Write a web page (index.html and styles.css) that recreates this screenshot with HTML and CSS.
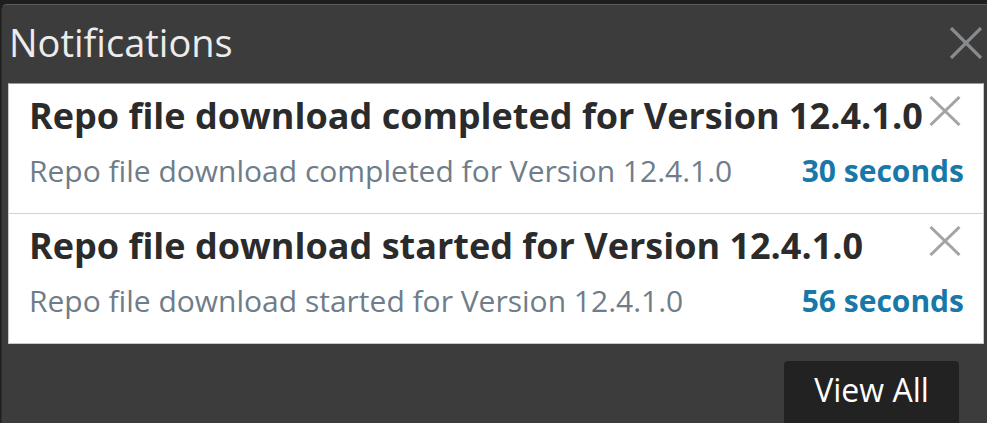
FILE: index.html
```html
<!DOCTYPE html>
<html lang="en">
<head>
<meta charset="utf-8">
<title>Notifications</title>
<link rel="stylesheet" href="styles.css">
</head>
<body>
<div class="panel">
  <div class="panel-header">
    <h1 class="panel-title">Notifications</h1>
    <button class="close close-header" aria-label="Close">
      <svg width="34" height="32" viewBox="0 0 34 32"><path d="M2 1 L32 31 M32 1 L2 31" stroke="currentColor" stroke-width="3.2" fill="none"/></svg>
    </button>
  </div>
  <ul class="list">
    <li class="item">
      <div class="item-top">
        <span class="item-title">Repo file download completed for Version 12.4.1.0</span>
        <button class="close close-item" aria-label="Dismiss">
          <svg width="32" height="30" viewBox="0 0 32 30"><path d="M1.5 1 L30.5 29 M30.5 1 L1.5 29" stroke="currentColor" stroke-width="3" fill="none"/></svg>
        </button>
      </div>
      <div class="item-bottom">
        <span class="item-desc">Repo file download completed for Version 12.4.1.0</span>
        <span class="item-time">30 seconds</span>
      </div>
    </li>
    <li class="item">
      <div class="item-top">
        <span class="item-title">Repo file download started for Version 12.4.1.0</span>
        <button class="close close-item" aria-label="Dismiss">
          <svg width="32" height="30" viewBox="0 0 32 30"><path d="M1.5 1 L30.5 29 M30.5 1 L1.5 29" stroke="currentColor" stroke-width="3" fill="none"/></svg>
        </button>
      </div>
      <div class="item-bottom">
        <span class="item-desc">Repo file download started for Version 12.4.1.0</span>
        <span class="item-time">56 seconds</span>
      </div>
    </li>
  </ul>
  <div class="panel-footer">
    <button class="view-all">View All</button>
  </div>
</div>
</body>
</html>
```
FILE: styles.css
```css
html, body {
  margin: 0;
  padding: 0;
  height: 100%;
  overflow: hidden;
  background: #1e1e1e;
  font-family: "Open Sans", "Noto Sans", sans-serif;
}

.panel {
  margin: 4px 0 0 1px;
  width: 990px;
  height: 430px;
  background: #3c3c3c;
  border-top: 1px solid #5c5c5c;
  border-left: 1px solid #2e2e2e;
  border-radius: 6px 0 0 0;
  box-sizing: border-box;
}

.panel-header {
  display: flex;
  align-items: flex-start;
  justify-content: space-between;
  padding: 15px 0 0 7px;
  height: 78px;
  box-sizing: border-box;
}

.panel-title {
  margin: 0;
  font-size: 38px;
  line-height: 44px;
  font-weight: 400;
  color: #ececec;
}

.close {
  background: none;
  border: 0;
  padding: 0;
  margin: 0;
  cursor: pointer;
  display: block;
}

.close svg {
  display: block;
}

.close-header {
  color: #888b8e;
  margin: 7px 8px 0 0;
}

.list {
  list-style: none;
  margin: 0 7px 0 6px;
  padding: 0;
  background: #ffffff;
  border: 1px solid #c8c8c8;
  border-top-color: #9a9a9a;
}

.item {
  padding: 12px 19px 0 20px;
  height: 129px;
  box-sizing: border-box;
}

.item + .item {
  border-top: 1px solid #d2d2d2;
  height: 130px;
}

.item-top {
  display: flex;
  align-items: flex-start;
  justify-content: space-between;
}

.item-title {
  font-size: 36px;
  line-height: 40px;
  font-weight: 700;
  color: #2b2b2b;
  white-space: nowrap;
}

.close-item {
  color: #a2a5a8;
  margin: 0 3px 0 0;
}

.item-bottom {
  display: flex;
  justify-content: space-between;
  align-items: baseline;
  margin-top: 17px;
}

.item-desc {
  font-size: 30px;
  line-height: 36px;
  color: #6e7d89;
}

.item-time {
  font-size: 30px;
  line-height: 36px;
  font-weight: 700;
  color: #1878a8;
}

.panel-footer {
  display: flex;
  justify-content: flex-end;
  padding: 17px 32px 0 0;
}

.view-all {
  background: #222222;
  color: #ffffff;
  border: 0;
  border-radius: 4px;
  font-family: "Open Sans", "Noto Sans", sans-serif;
  font-size: 32px;
  line-height: 40px;
  padding: 9px 0 22px;
  width: 175px;
  cursor: pointer;
}
```
